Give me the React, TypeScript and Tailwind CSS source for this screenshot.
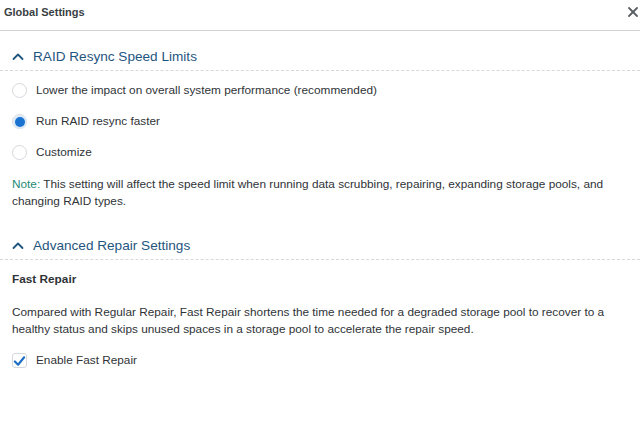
import React, { useState } from 'react';

function Chevron() {
  return (
    <svg width="12" height="12" viewBox="0 0 12 12" fill="none" stroke="#1f5680" strokeWidth="1.8" strokeLinecap="round" strokeLinejoin="round">
      <polyline points="1.5 8 6 3.5 10.5 8"></polyline>
    </svg>
  );
}

function SectionHeader({ title }: { title: string }) {
  return (
    <div className="flex items-center gap-[9px] pl-[12px] h-[28px] border-b border-dashed border-[#d6d9dc]">
      <Chevron />
      <span className="text-[13.6px] text-[#1f5680] mt-[1px]">{title}</span>
    </div>
  );
}

function Radio({ label, checked, onClick }: { label: string; checked: boolean; onClick: () => void }) {
  return (
    <div className="flex items-center gap-[9px] h-[31px] cursor-pointer" onClick={onClick}>
      <span className="w-[15px] h-[15px] rounded-full border border-[#d5d8dc] bg-white flex items-center justify-center">
        {checked ? <span className="w-[10px] h-[10px] rounded-full bg-[#1a73d0] ring-2 ring-[#dbe9f8]" /> : null}
      </span>
      <span className="text-[11.8px] text-[#2f3337]">{label}</span>
    </div>
  );
}

export default function App() {
  const [speed, setSpeed] = useState(1);
  const [fast, setFast] = useState(true);
  const options = [
    'Lower the impact on overall system performance (recommended)',
    'Run RAID resync faster',
    'Customize',
  ];

  return (
    <div className="w-[640px] h-[427px] bg-white overflow-hidden" style={{ fontFamily: '"Liberation Sans", Arial, sans-serif' }}>
      <div className="flex items-center justify-between h-[31px] pl-[4px] pr-[1px] border-b border-[#cfd3d6]">
        <span className="text-[11px] font-bold text-[#3a3f44] -mt-[6px]">Global Settings</span>
        <button className="text-[#5a5f64] -mt-[6px]">
          <svg width="12" height="12" viewBox="0 0 12 12" stroke="currentColor" strokeWidth="1.8" strokeLinecap="round">
            <line x1="2" y1="2" x2="10" y2="10"></line>
            <line x1="10" y1="2" x2="2" y2="10"></line>
          </svg>
        </button>
      </div>

      <div className="mt-[12px]">
        <SectionHeader title="RAID Resync Speed Limits" />
        <div className="px-[12px] pt-[4px]">
          {options.map((o, i) => (
            <Radio key={o} label={o} checked={speed === i} onClick={() => setSpeed(i)} />
          ))}
          <p className="mt-[8px] text-[11.8px] leading-[17px] text-[#2f3337]">
            <span className="text-[#1d8a78]">Note:</span> This setting will affect the speed limit when running data scrubbing, repairing, expanding storage pools, and changing RAID types.
          </p>
        </div>
      </div>

      <div className="mt-[22px]">
        <SectionHeader title="Advanced Repair Settings" />
        <div className="px-[12px]">
          <div className="mt-[11px] text-[11.8px] font-bold text-[#2f3337]">Fast Repair</div>
          <p className="mt-[15px] text-[11.8px] leading-[17px] text-[#2f3337]">
            Compared with Regular Repair, Fast Repair shortens the time needed for a degraded storage pool to recover to a healthy status and skips unused spaces in a storage pool to accelerate the repair speed.
          </p>
          <div className="flex items-center gap-[9px] mt-[14px] cursor-pointer" onClick={() => setFast(!fast)}>
            <span className="w-[15px] h-[15px] rounded-[3px] border border-[#d5d8dc] bg-white flex items-center justify-center">
              {fast ? (
                <svg width="14" height="14" viewBox="0 0 14 14" fill="none" stroke="#1a6fc4" strokeWidth="2.3" strokeLinecap="round" strokeLinejoin="round">
                  <polyline points="2 7.5 5.5 11 12 3"></polyline>
                </svg>
              ) : null}
            </span>
            <span className="text-[11.8px] text-[#2f3337]">Enable Fast Repair</span>
          </div>
        </div>
      </div>
    </div>
  );
}
